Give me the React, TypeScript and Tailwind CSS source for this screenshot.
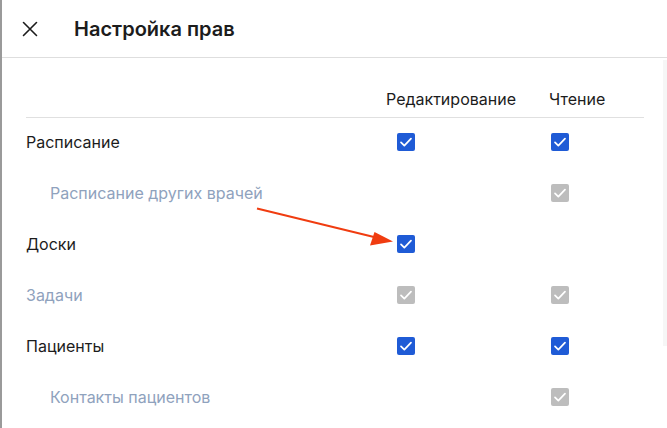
import React from "react";

type Row = { label: string; indent?: boolean; muted?: boolean; edit?: "on" | "off" | "none"; read?: "on" | "off" | "none" };

const rows: Row[] = [
  { label: "Расписание", edit: "on", read: "on" },
  { label: "Расписание других врачей", indent: true, muted: true, edit: "none", read: "off" },
  { label: "Доски", edit: "on", read: "none" },
  { label: "Задачи", muted: true, edit: "off", read: "off" },
  { label: "Пациенты", edit: "on", read: "on" },
  { label: "Контакты пациентов", indent: true, muted: true, edit: "none", read: "off" },
];

function Check({ state }: { state: "on" | "off" }) {
  return (
    <div
      className={
        "w-[18px] h-[18px] rounded-[2px] flex items-center justify-center " +
        (state === "on" ? "bg-[#1f5bd6]" : "bg-[#bdbdbd]")
      }
    >
      <svg width="16" height="16" viewBox="0 0 24 24" fill="none">
        <path d="M4.5 12.5l5 5L19.5 7" stroke="white" strokeWidth="2.6" strokeLinecap="round" strokeLinejoin="round" />
      </svg>
    </div>
  );
}

export default function App() {
  return (
    <div
      className="relative w-[667px] h-[428px] bg-white overflow-hidden border-l-2 border-[#9a9a9a] text-[#1c1c1c]"
      style={{ fontFamily: "Inter, 'Noto Sans', sans-serif" }}
    >
      <div className="h-[58px] flex items-center border-b border-[#dedede]">
        <div className="w-[72px] flex items-center pl-[18px]">
          <svg width="20" height="20" viewBox="0 0 20 20" fill="none">
            <path d="M3.5 3.5l13 13M16.5 3.5l-13 13" stroke="#1c1c1c" strokeWidth="1.6" strokeLinecap="round" />
          </svg>
        </div>
        <div className="text-[20px] leading-none font-semibold">Настройка прав</div>
      </div>

      <div className="pl-[24px] pr-[23px]">
        <div className="grid grid-cols-[360px_163px_93px] h-[60px] items-end border-b border-[#e0e0e0] pb-[6px] text-[16px]">
          <div />
          <div>Редактирование</div>
          <div>Чтение</div>
        </div>
        {rows.map((r, i) => (
          <div key={i} className="grid grid-cols-[360px_163px_93px] h-[51px] items-center text-[16px] pb-[3px]">
            <div className={(r.indent ? "pl-[24px] " : "") + (r.muted ? "text-[#8fa2bd]" : "text-[#1c1c1c]")}>{r.label}</div>
            <div className="pl-[11px]">{r.edit !== "none" && <Check state={r.edit as "on" | "off"} />}</div>
            <div className="pl-[2px]">{r.read !== "none" && <Check state={r.read as "on" | "off"} />}</div>
          </div>
        ))}
      </div>

      <div className="absolute right-0 top-[60px] w-[4px] h-[286px] bg-[#f6f6f6]" />

      <svg className="absolute left-0 top-0" width="667" height="428" viewBox="0 0 667 428">
        <line x1="255" y1="208.5" x2="374" y2="237.5" stroke="#f03c10" strokeWidth="2" />
        <polygon points="391,241.5 368,245.5 372.5,232" fill="#f03c10" />
      </svg>
    </div>
  );
}
